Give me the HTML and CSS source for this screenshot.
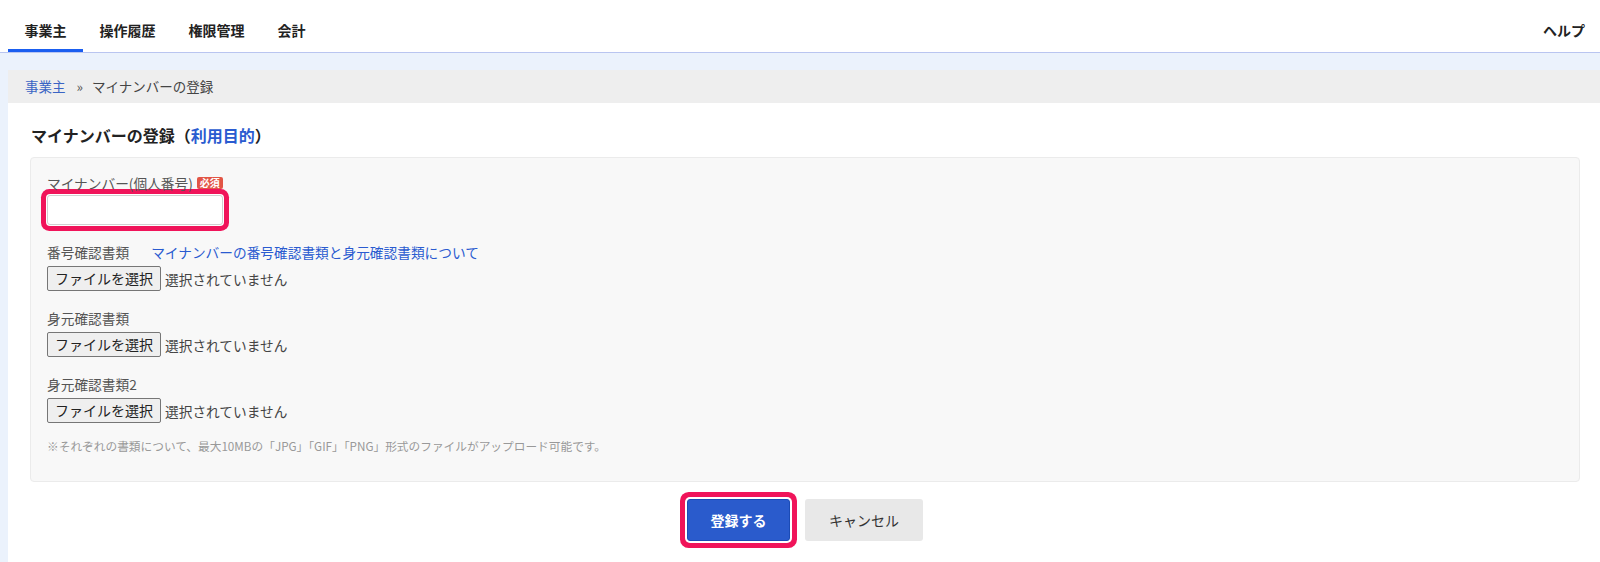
FILE: index.html
```html
<!DOCTYPE html>
<html lang="ja">
<head>
    <meta charset="UTF-8">
    <meta name="viewport" content="width=device-width, initial-scale=1.0">
    <title>マイナンバーの登録</title>
    <link rel="stylesheet" href="styles.css">
</head>
<body>
    <header class="topnav">
        <nav class="tabs">
            <a href="#" class="tab active">事業主</a>
            <a href="#" class="tab">操作履歴</a>
            <a href="#" class="tab">権限管理</a>
            <a href="#" class="tab">会計</a>
        </nav>
        <a href="#" class="help">ヘルプ</a>
    </header>

    <main class="page">
        <div class="breadcrumb">
            <a href="#">事業主</a>
            <span class="sep">»</span>
            <span>マイナンバーの登録</span>
        </div>

        <section class="content">
            <h2 class="page-title">マイナンバーの登録（<a href="#">利用目的</a>）</h2>

            <form class="panel" id="myNumberForm">
                <div class="field field-text">
                    <label for="myNumber" class="field-label">マイナンバー(個人番号) <span class="badge">必須</span></label>
                    <input type="text" id="myNumber" name="myNumber" class="text-input focus-mark">
                </div>

                <div class="field">
                    <div class="field-label">
                        <span>番号確認書類</span>
                        <a href="#" class="doc-link">マイナンバーの番号確認書類と身元確認書類について</a>
                    </div>
                    <label class="file">
                        <input type="file" name="numberDoc" accept="image/jpeg,image/gif,image/png">
                        <span class="file-btn">ファイルを選択</span>
                        <span class="file-name">選択されていません</span>
                    </label>
                </div>

                <div class="field">
                    <div class="field-label">身元確認書類</div>
                    <label class="file">
                        <input type="file" name="idDoc" accept="image/jpeg,image/gif,image/png">
                        <span class="file-btn">ファイルを選択</span>
                        <span class="file-name">選択されていません</span>
                    </label>
                </div>

                <div class="field">
                    <div class="field-label">身元確認書類2</div>
                    <label class="file">
                        <input type="file" name="idDoc2" accept="image/jpeg,image/gif,image/png">
                        <span class="file-btn">ファイルを選択</span>
                        <span class="file-name">選択されていません</span>
                    </label>
                </div>

                <p class="note">※それぞれの書類について、最大10MBの「JPG」「GIF」「PNG」形式のファイルがアップロード可能です。</p>
            </form>

            <div class="actions">
                <button type="submit" form="myNumberForm" class="btn btn-primary focus-mark">登録する</button>
                <button type="button" class="btn btn-cancel">キャンセル</button>
            </div>
        </section>
    </main>

    <script>
        document.querySelectorAll('.file input').forEach(function (input) {
            input.addEventListener('change', function () {
                const name = input.files.length ? input.files[0].name : '選択されていません';
                input.parentNode.querySelector('.file-name').textContent = name;
            });
        });
    </script>
</body>
</html>
```

FILE: styles.css
```css
body {
    font-family: "Noto Sans CJK JP", "Noto Sans", sans-serif;
    background-color: #ebf2fc;
    color: #333;
    margin: 0;
    padding: 0;
}
a {
    color: #2a5bd0;
    text-decoration: none;
}

/* top navigation */
.topnav {
    display: flex;
    justify-content: space-between;
    align-items: stretch;
    height: 52px;
    padding: 0 15px 0 8px;
    background: #fff;
    border-bottom: 1px solid #b9c5f0;
}
.tabs {
    display: flex;
}
.tab {
    display: block;
    padding: 20px 16.5px 0;
    height: 29px;
    line-height: 20px;
    font-size: 14px;
    font-weight: bold;
    color: #222;
    border-bottom: 3px solid transparent;
}
.tab.active {
    border-bottom-color: #1a5ef0;
}
.help {
    padding-top: 20px;
    line-height: 20px;
    font-size: 14px;
    font-weight: bold;
    color: #222;
}

/* page body */
.page {
    padding: 17px 0 0 8px;
}
.breadcrumb {
    height: 33px;
    line-height: 33px;
    padding-left: 17px;
    background: #eeeeee;
    font-size: 13.5px;
    color: #444;
}
.breadcrumb a {
    color: #3a64c4;
}
.breadcrumb .sep {
    margin: 0 6px 0 8px;
    color: #555;
}
.content {
    min-height: 406px;
    background: #fff;
    padding: 21px 20px 30px 22px;
}
.page-title {
    margin: 0 0 11px;
    padding-left: 1px;
    font-size: 16px;
    line-height: 22px;
    color: #222;
}

/* form panel */
.panel {
    background: #f8f8f8;
    border: 1px solid #ebebeb;
    border-radius: 4px;
    padding: 15px 16px 26px;
    margin: 0;
}
.field {
    margin-top: 17px;
}
.field:first-child {
    margin-top: 0;
}
.field-label {
    display: flex;
    align-items: center;
    height: 20px;
    margin-bottom: 4px;
    font-size: 13.7px;
    color: #555;
}
.field-text .field-label {
    margin-bottom: 2px;
    gap: 4px;
}
.badge {
    display: inline-block;
    background: #e25545;
    color: #fff;
    font-size: 10px;
    font-weight: bold;
    line-height: 12px;
    padding: 0 3px;
    border-radius: 2px;
}
.doc-link {
    margin-left: 22px;
    color: #2a5bd0;
}
.text-input {
    display: block;
    width: 176px;
    height: 30px;
    box-sizing: border-box;
    border: 1px solid #d0d0d0;
    border-radius: 2px;
    background: #fff;
    font-size: 14px;
    padding: 4px 8px;
    outline: none;
}

/* highlighted controls */
.focus-mark {
    box-shadow: 0 0 0 1px #fff, 0 0 0 6px #f0145a;
}
.text-input.focus-mark {
    border-radius: 3px;
}

/* file pickers */
.file {
    display: flex;
    align-items: center;
    gap: 4px;
    cursor: pointer;
}
.file input {
    display: none;
}
.file-btn {
    display: block;
    height: 25px;
    line-height: 23px;
    box-sizing: border-box;
    padding: 0 7px;
    border: 1px solid #767676;
    border-radius: 2px;
    background: #efefef;
    font-size: 14px;
    color: #222;
}
.file-name {
    font-size: 13.7px;
    color: #444;
}
.note {
    margin: 14px 0 0;
    font-size: 11.7px;
    line-height: 18px;
    color: #999;
}

/* bottom buttons */
.actions {
    display: flex;
    justify-content: center;
    gap: 15px;
    margin-top: 17px;
}
.btn {
    height: 42px;
    border-radius: 3px;
    font-family: inherit;
    font-size: 14px;
    cursor: pointer;
}
.btn-primary {
    width: 103px;
    background: #2a5bcc;
    border: 1px solid #1b4bb5;
    color: #fff;
    font-weight: bold;
}
.btn-primary.focus-mark {
    box-shadow: 0 0 0 2px #fff, 0 0 0 7px #f0145a;
    border-radius: 3px;
}
.btn-cancel {
    width: 118px;
    background: #e8e8e8;
    border: none;
    color: #333;
}
```
